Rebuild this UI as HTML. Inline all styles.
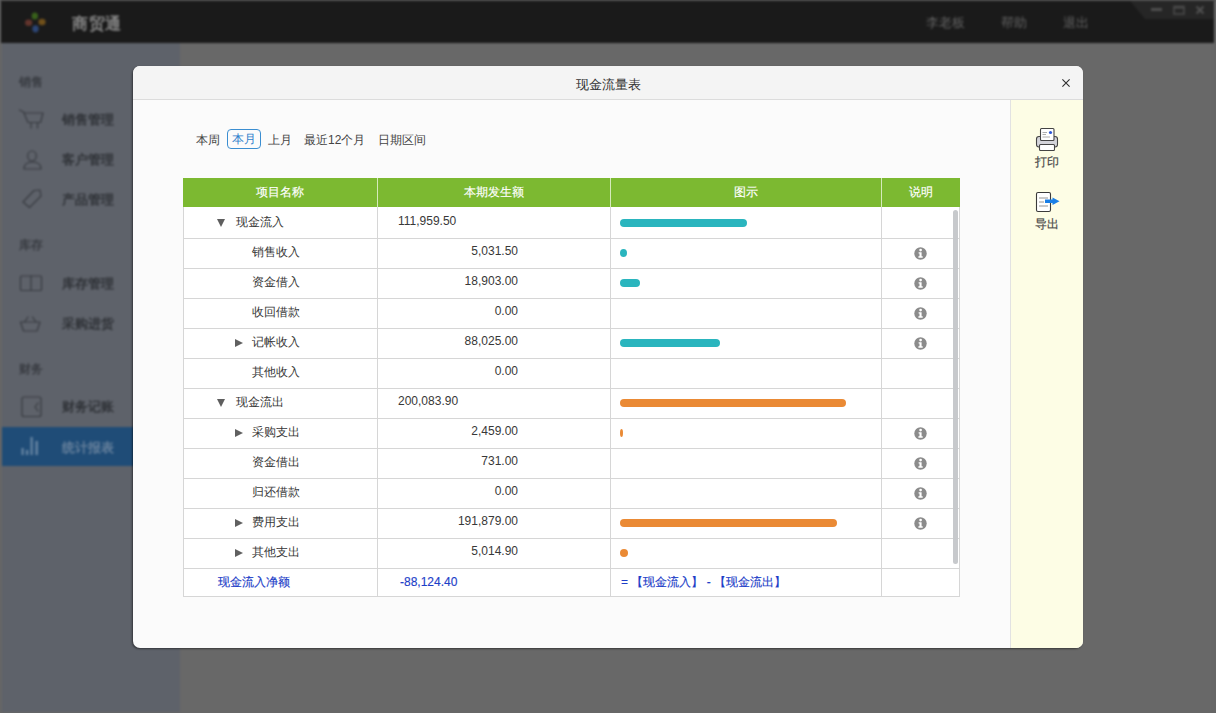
<!DOCTYPE html>
<html><head><meta charset="utf-8">
<style>
*{margin:0;padding:0;box-sizing:border-box}
html,body{width:1216px;height:713px;overflow:hidden;background:#686868;font-family:"Liberation Sans",sans-serif}
.abs{position:absolute}
#frame{left:0;top:0;width:1216px;height:713px;background:#666}
#top{left:1px;top:1px;width:1213px;height:42px;background:#1a1a1a}
#wc{left:1130px;top:1px;width:84px;height:18px;background:#262626;clip-path:polygon(0 0,100% 0,100% 100%,15px 100%)}
#main{left:180px;top:43px;width:1033px;height:669px;background:#686868}
#side{left:2px;top:43px;width:178px;height:669px;background:#5e626a}
.brand{left:72px;top:13.5px;font-size:15.5px;font-weight:bold;color:#858585;letter-spacing:0.5px;line-height:20px}
.tnav{top:14px;font-size:13px;color:#626262;line-height:18px}
.sec{left:19px;font-size:11.5px;color:#393c42;font-weight:bold;line-height:16px}
.item{left:62px;font-size:12.5px;color:#303338;font-weight:bold;line-height:18px}
.ico{left:0;top:0}
#active{left:2px;top:427px;width:178px;height:39px;background:#1f4c77}
#modal{left:133px;top:66px;width:950px;height:582px;border-radius:7px;overflow:hidden;background:#fbfbfb;box-shadow:-1px 1px 2px rgba(0,0,0,.45)}
#mhead{left:0;top:0;width:950px;height:34px;background:#f4f4f4;border-bottom:1px solid #dcdcdc}
#mtitle{left:0;top:10px;width:950px;text-align:center;font-size:13px;color:#333;line-height:18px}
#rpanel{left:877px;top:34px;width:73px;height:548px;background:#fdfde5;border-left:1px solid #e2e2e2}
.tab{top:65px;font-size:12px;color:#444;line-height:18px}
#tabon{left:94px;top:63px;width:34px;height:20px;border:1px solid #3b8ed1;border-radius:4px;color:#2f7fcc;text-align:center;line-height:19px;font-size:12px}
.th{font-size:12px;color:#fff;text-align:center;line-height:29px;-webkit-text-stroke:0.15px #fff}
.td{font-size:12px;color:#383838;line-height:16px;white-space:nowrap}
.blue{color:#1d3ec8;-webkit-text-stroke:0.15px #1d3ec8}
.info{width:13px;height:13px;border-radius:50%;background:#8a8a8a;color:#fff;font-size:10px;font-weight:bold;text-align:center;line-height:13px;font-family:"Liberation Serif",serif}
.rtxt{left:877px;width:73px;text-align:center;font-size:12px;color:#4a4a4a;line-height:16px;-webkit-text-stroke:0.2px #4a4a4a}
</style></head><body>
<div id="frame" class="abs"></div>
<div id="bg" class="abs" style="left:0;top:0;width:1216px;height:713px;filter:blur(0.8px)">
<div class="abs" style="left:0;top:0;width:1216px;height:1px;background:#454545"></div>
<div id="top" class="abs"></div>
<div id="wc" class="abs"></div>
<svg class="abs" style="left:1140px;top:0" width="76" height="20" viewBox="1140 0 76 20">
  <rect x="1151" y="8" width="11" height="3" fill="#4e4e4e"/>
  <rect x="1174" y="6.5" width="10" height="7.5" fill="none" stroke="#4a4a4a" stroke-width="1.6"/>
  <rect x="1174" y="6" width="10" height="2.5" fill="#4a4a4a"/>
  <path d="M1196.5 6.5 L1203.5 13.5 M1203.5 6.5 L1196.5 13.5" stroke="#505050" stroke-width="2.2"/>
</svg>
<div id="main" class="abs"></div>
<div id="side" class="abs"></div>
<svg class="abs" style="left:14px;top:8px" width="40" height="30" viewBox="14 8 40 30">
  <ellipse cx="34.8" cy="16" rx="3.2" ry="3.6" fill="#38601a"/>
  <ellipse cx="42" cy="22" rx="3.6" ry="3.2" fill="#70501a"/>
  <ellipse cx="28.6" cy="22.8" rx="3.6" ry="3.2" fill="#62342c"/>
  <ellipse cx="35.5" cy="28.8" rx="3.2" ry="3.6" fill="#2c4575"/>
</svg>
<div class="abs brand">商贸通</div>
<div class="abs tnav" style="left:926px">李老板</div>
<div class="abs tnav" style="left:1001px">帮助</div>
<div class="abs tnav" style="left:1063px">退出</div>

<div class="abs sec" style="top:74px">销售</div>
<div class="abs item" style="top:111px">销售管理</div>
<div class="abs item" style="top:151px">客户管理</div>
<div class="abs item" style="top:191px">产品管理</div>
<div class="abs sec" style="top:237px">库存</div>
<div class="abs item" style="top:275px">库存管理</div>
<div class="abs item" style="top:315px">采购进货</div>
<div class="abs sec" style="top:361px">财务</div>
<div class="abs item" style="top:398px">财务记账</div>
<div id="active" class="abs"></div>
<div class="abs item" style="top:439px;color:#66809c">统计报表</div>
<svg class="abs" style="left:0;top:100px" width="60" height="370" viewBox="0 100 60 370" fill="none" stroke="#383b41" stroke-width="1.2" stroke-linecap="round" stroke-linejoin="round">
  <!-- cart -->
  <path d="M19.5 110 L23.5 112 L28 122.5 L40.5 122.5 L43 113 L24.5 113"/>
  <path d="M31 122.5 L31 128 M37.5 122.5 L37.5 128"/>
  <!-- person -->
  <ellipse cx="32" cy="156" rx="4.3" ry="5"/>
  <path d="M24 169 C24 164 28 162 32.5 162 C37 162 41 164 41 169 Z"/>
  <!-- tag -->
  <path d="M23 202 L34 190.5 L40 190 L41 196 L29.5 207.5 Z"/>
  <!-- book -->
  <rect x="20.5" y="276" width="21" height="14.5" rx="1"/>
  <path d="M31 276 L31 290.5"/>
  <!-- basket -->
  <path d="M20.5 322 L40 322 L37 331 L23.5 331 Z"/>
  <path d="M24.5 322 L28 317 M36 322 L32.5 317"/>
  <!-- ledger -->
  <rect x="22" y="397" width="19" height="19.5" rx="2"/>
  <path d="M38 403 L35 407 L38 411"/>
</svg>
<svg class="abs" style="left:0;top:430px" width="60" height="40" viewBox="0 430 60 40" fill="#6886a4">
  <rect x="21.5" y="448" width="2.2" height="7"/>
  <rect x="26" y="450" width="2.2" height="5"/>
  <rect x="30.5" y="437" width="2.2" height="18"/>
  <rect x="35.5" y="441" width="2.4" height="14"/>
</svg>

</div>
<div id="modal" class="abs">
  <div id="mhead" class="abs"></div>
  <div id="mtitle" class="abs">现金流量表</div>
  <svg class="abs" style="left:925px;top:9px" width="16" height="16" viewBox="0 0 16 16"><path d="M4.4 4.4 L11.6 11.6 M11.6 4.4 L4.4 11.6" stroke="#2e2e2e" stroke-width="1.1"/></svg>
  <div id="rpanel" class="abs"></div>
  <div class="abs tab" style="left:63px">本周</div>
  <div id="tabon" class="abs">本月</div>
  <div class="abs tab" style="left:135px">上月</div>
  <div class="abs tab" style="left:171px">最近12个月</div>
  <div class="abs tab" style="left:245px">日期区间</div>
<div class="abs" style="left:50px;top:112px;width:777px;height:419px;background:#fff;border:1px solid #d6d6d6;border-top:none"></div>
<div class="abs" style="left:50px;top:112px;width:777px;height:29px;background:#7cb931"></div>
<div class="abs th" style="left:50px;top:112px;width:194px">项目名称</div>
<div class="abs th" style="left:244px;top:112px;width:233px">本期发生额</div>
<div class="abs th" style="left:477px;top:112px;width:271px">图示</div>
<div class="abs th" style="left:748px;top:112px;width:79px">说明</div>
<div class="abs" style="left:244px;top:112px;width:1px;height:29px;background:#d5eabb"></div>
<div class="abs" style="left:477px;top:112px;width:1px;height:29px;background:#d5eabb"></div>
<div class="abs" style="left:748px;top:112px;width:1px;height:29px;background:#d5eabb"></div>
<div class="abs" style="left:244px;top:141px;width:1px;height:389px;background:#d6d6d6"></div>
<div class="abs" style="left:477px;top:141px;width:1px;height:389px;background:#d6d6d6"></div>
<div class="abs" style="left:748px;top:141px;width:1px;height:389px;background:#d6d6d6"></div>
<div class="abs" style="left:50px;top:172px;width:777px;height:1px;background:#d6d6d6"></div>
<div class="abs" style="left:50px;top:202px;width:777px;height:1px;background:#d6d6d6"></div>
<div class="abs" style="left:50px;top:232px;width:777px;height:1px;background:#d6d6d6"></div>
<div class="abs" style="left:50px;top:262px;width:777px;height:1px;background:#d6d6d6"></div>
<div class="abs" style="left:50px;top:292px;width:777px;height:1px;background:#d6d6d6"></div>
<div class="abs" style="left:50px;top:322px;width:777px;height:1px;background:#d6d6d6"></div>
<div class="abs" style="left:50px;top:352px;width:777px;height:1px;background:#d6d6d6"></div>
<div class="abs" style="left:50px;top:382px;width:777px;height:1px;background:#d6d6d6"></div>
<div class="abs" style="left:50px;top:412px;width:777px;height:1px;background:#d6d6d6"></div>
<div class="abs" style="left:50px;top:442px;width:777px;height:1px;background:#d6d6d6"></div>
<div class="abs" style="left:50px;top:472px;width:777px;height:1px;background:#d6d6d6"></div>
<div class="abs" style="left:50px;top:502px;width:777px;height:1px;background:#d6d6d6"></div>
<div class="abs" style="left:84px;top:152.5px;width:0;height:0;border-left:4.5px solid transparent;border-right:4.5px solid transparent;border-top:8px solid #5e5e5e"></div>
<div class="abs td" style="left:103px;top:147.5px">现金流入</div>
<div class="abs td num" style="left:265px;top:147.0px">111,959.50</div>
<div class="abs" style="left:487px;top:153px;width:127px;height:8px;border-radius:4px;background:#2ab5be"></div>
<div class="abs td" style="left:119px;top:177.5px">销售收入</div>
<div class="abs td num" style="left:244px;top:177.0px;width:141px;text-align:right">5,031.50</div>
<div class="abs" style="left:487px;top:183px;width:7px;height:8px;border-radius:50%;background:#2ab5be"></div>
<svg class="abs" style="left:781px;top:181px" width="13" height="13" viewBox="0 0 13 13"><circle cx="6.5" cy="6.5" r="6.2" fill="#8b8b8b"/><circle cx="6.6" cy="3.1" r="1.35" fill="#fff"/><path d="M4.6 5.3 H7.6 V9.3 H8.7 V10.8 H4.4 V9.3 H5.5 V6.6 H4.6 Z" fill="#fff"/></svg>
<div class="abs td" style="left:119px;top:207.5px">资金借入</div>
<div class="abs td num" style="left:244px;top:207.0px;width:141px;text-align:right">18,903.00</div>
<div class="abs" style="left:487px;top:213px;width:20px;height:8px;border-radius:4px;background:#2ab5be"></div>
<svg class="abs" style="left:781px;top:211px" width="13" height="13" viewBox="0 0 13 13"><circle cx="6.5" cy="6.5" r="6.2" fill="#8b8b8b"/><circle cx="6.6" cy="3.1" r="1.35" fill="#fff"/><path d="M4.6 5.3 H7.6 V9.3 H8.7 V10.8 H4.4 V9.3 H5.5 V6.6 H4.6 Z" fill="#fff"/></svg>
<div class="abs td" style="left:119px;top:237.5px">收回借款</div>
<div class="abs td num" style="left:244px;top:237.0px;width:141px;text-align:right">0.00</div>
<svg class="abs" style="left:781px;top:241px" width="13" height="13" viewBox="0 0 13 13"><circle cx="6.5" cy="6.5" r="6.2" fill="#8b8b8b"/><circle cx="6.6" cy="3.1" r="1.35" fill="#fff"/><path d="M4.6 5.3 H7.6 V9.3 H8.7 V10.8 H4.4 V9.3 H5.5 V6.6 H4.6 Z" fill="#fff"/></svg>
<div class="abs" style="left:102px;top:273px;width:0;height:0;border-top:4px solid transparent;border-bottom:4px solid transparent;border-left:8px solid #606060"></div>
<div class="abs td" style="left:119px;top:267.5px">记帐收入</div>
<div class="abs td num" style="left:244px;top:267.0px;width:141px;text-align:right">88,025.00</div>
<div class="abs" style="left:487px;top:273px;width:100px;height:8px;border-radius:4px;background:#2ab5be"></div>
<svg class="abs" style="left:781px;top:271px" width="13" height="13" viewBox="0 0 13 13"><circle cx="6.5" cy="6.5" r="6.2" fill="#8b8b8b"/><circle cx="6.6" cy="3.1" r="1.35" fill="#fff"/><path d="M4.6 5.3 H7.6 V9.3 H8.7 V10.8 H4.4 V9.3 H5.5 V6.6 H4.6 Z" fill="#fff"/></svg>
<div class="abs td" style="left:119px;top:297.5px">其他收入</div>
<div class="abs td num" style="left:244px;top:297.0px;width:141px;text-align:right">0.00</div>
<div class="abs" style="left:84px;top:332.5px;width:0;height:0;border-left:4.5px solid transparent;border-right:4.5px solid transparent;border-top:8px solid #5e5e5e"></div>
<div class="abs td" style="left:103px;top:327.5px">现金流出</div>
<div class="abs td num" style="left:265px;top:327.0px">200,083.90</div>
<div class="abs" style="left:487px;top:333px;width:226px;height:8px;border-radius:4px;background:#ea8a35"></div>
<div class="abs" style="left:102px;top:363px;width:0;height:0;border-top:4px solid transparent;border-bottom:4px solid transparent;border-left:8px solid #606060"></div>
<div class="abs td" style="left:119px;top:357.5px">采购支出</div>
<div class="abs td num" style="left:244px;top:357.0px;width:141px;text-align:right">2,459.00</div>
<div class="abs" style="left:487px;top:363px;width:3px;height:8px;border-radius:50%;background:#ea8a35"></div>
<svg class="abs" style="left:781px;top:361px" width="13" height="13" viewBox="0 0 13 13"><circle cx="6.5" cy="6.5" r="6.2" fill="#8b8b8b"/><circle cx="6.6" cy="3.1" r="1.35" fill="#fff"/><path d="M4.6 5.3 H7.6 V9.3 H8.7 V10.8 H4.4 V9.3 H5.5 V6.6 H4.6 Z" fill="#fff"/></svg>
<div class="abs td" style="left:119px;top:387.5px">资金借出</div>
<div class="abs td num" style="left:244px;top:387.0px;width:141px;text-align:right">731.00</div>
<svg class="abs" style="left:781px;top:391px" width="13" height="13" viewBox="0 0 13 13"><circle cx="6.5" cy="6.5" r="6.2" fill="#8b8b8b"/><circle cx="6.6" cy="3.1" r="1.35" fill="#fff"/><path d="M4.6 5.3 H7.6 V9.3 H8.7 V10.8 H4.4 V9.3 H5.5 V6.6 H4.6 Z" fill="#fff"/></svg>
<div class="abs td" style="left:119px;top:417.5px">归还借款</div>
<div class="abs td num" style="left:244px;top:417.0px;width:141px;text-align:right">0.00</div>
<svg class="abs" style="left:781px;top:421px" width="13" height="13" viewBox="0 0 13 13"><circle cx="6.5" cy="6.5" r="6.2" fill="#8b8b8b"/><circle cx="6.6" cy="3.1" r="1.35" fill="#fff"/><path d="M4.6 5.3 H7.6 V9.3 H8.7 V10.8 H4.4 V9.3 H5.5 V6.6 H4.6 Z" fill="#fff"/></svg>
<div class="abs" style="left:102px;top:453px;width:0;height:0;border-top:4px solid transparent;border-bottom:4px solid transparent;border-left:8px solid #606060"></div>
<div class="abs td" style="left:119px;top:447.5px">费用支出</div>
<div class="abs td num" style="left:244px;top:447.0px;width:141px;text-align:right">191,879.00</div>
<div class="abs" style="left:487px;top:453px;width:217px;height:8px;border-radius:4px;background:#ea8a35"></div>
<svg class="abs" style="left:781px;top:451px" width="13" height="13" viewBox="0 0 13 13"><circle cx="6.5" cy="6.5" r="6.2" fill="#8b8b8b"/><circle cx="6.6" cy="3.1" r="1.35" fill="#fff"/><path d="M4.6 5.3 H7.6 V9.3 H8.7 V10.8 H4.4 V9.3 H5.5 V6.6 H4.6 Z" fill="#fff"/></svg>
<div class="abs" style="left:102px;top:483px;width:0;height:0;border-top:4px solid transparent;border-bottom:4px solid transparent;border-left:8px solid #606060"></div>
<div class="abs td" style="left:119px;top:477.5px">其他支出</div>
<div class="abs td num" style="left:244px;top:477.0px;width:141px;text-align:right">5,014.90</div>
<div class="abs" style="left:487px;top:483px;width:8px;height:8px;border-radius:4px;background:#ea8a35"></div>
<div class="abs td blue" style="left:85px;top:508px">现金流入净额</div>
<div class="abs td blue num" style="left:267px;top:508px">-88,124.40</div>
<div class="abs td blue" style="left:488px;top:508px">= 【现金流入】 - 【现金流出】</div>
<div class="abs" style="left:819.5px;top:144px;width:5.5px;height:354px;border-radius:3px;background:#c7c9cc"></div>
  <svg class="abs" style="left:900px;top:60px" width="30" height="30" viewBox="1033 126 30 30">
    <rect x="1036.5" y="136.5" width="21" height="10.5" rx="2.5" fill="#d4d4da" stroke="#444" stroke-width="1.1"/>
    <rect x="1040.5" y="128.5" width="13.5" height="12" rx="1" fill="#fff" stroke="#444" stroke-width="1.1"/>
    <path d="M1042.5 132.5 L1047 132.5 M1042.5 134.5 L1046 134.5 M1042.5 137 L1050 137" stroke="#999" stroke-width="0.8"/>
    <circle cx="1050.5" cy="132.5" r="1.6" fill="#2b55d6"/>
    <rect x="1039.5" y="144.5" width="15" height="6" rx="1" fill="#fff" stroke="#444" stroke-width="1.1"/>
  </svg>
  <div class="abs rtxt" style="top:87.5px">打印</div>
  <svg class="abs" style="left:900px;top:124px" width="30" height="30" viewBox="1033 190 30 30">
    <rect x="1036.5" y="192.5" width="14" height="19" rx="1.5" fill="#fff" stroke="#3a3a3a" stroke-width="1.1"/>
    <path d="M1039 198 L1048 198 M1039 202 L1044 202 M1039 206 L1048 206" stroke="#888" stroke-width="0.9"/>
    <path d="M1045 199.6 L1052.5 199.6 L1052.5 197.6 L1059.5 201.3 L1052.5 205 L1052.5 203 L1045 203 Z" fill="#1a7fe6"/>
  </svg>
  <div class="abs rtxt" style="top:150px">导出</div>
</div>
</body></html>
